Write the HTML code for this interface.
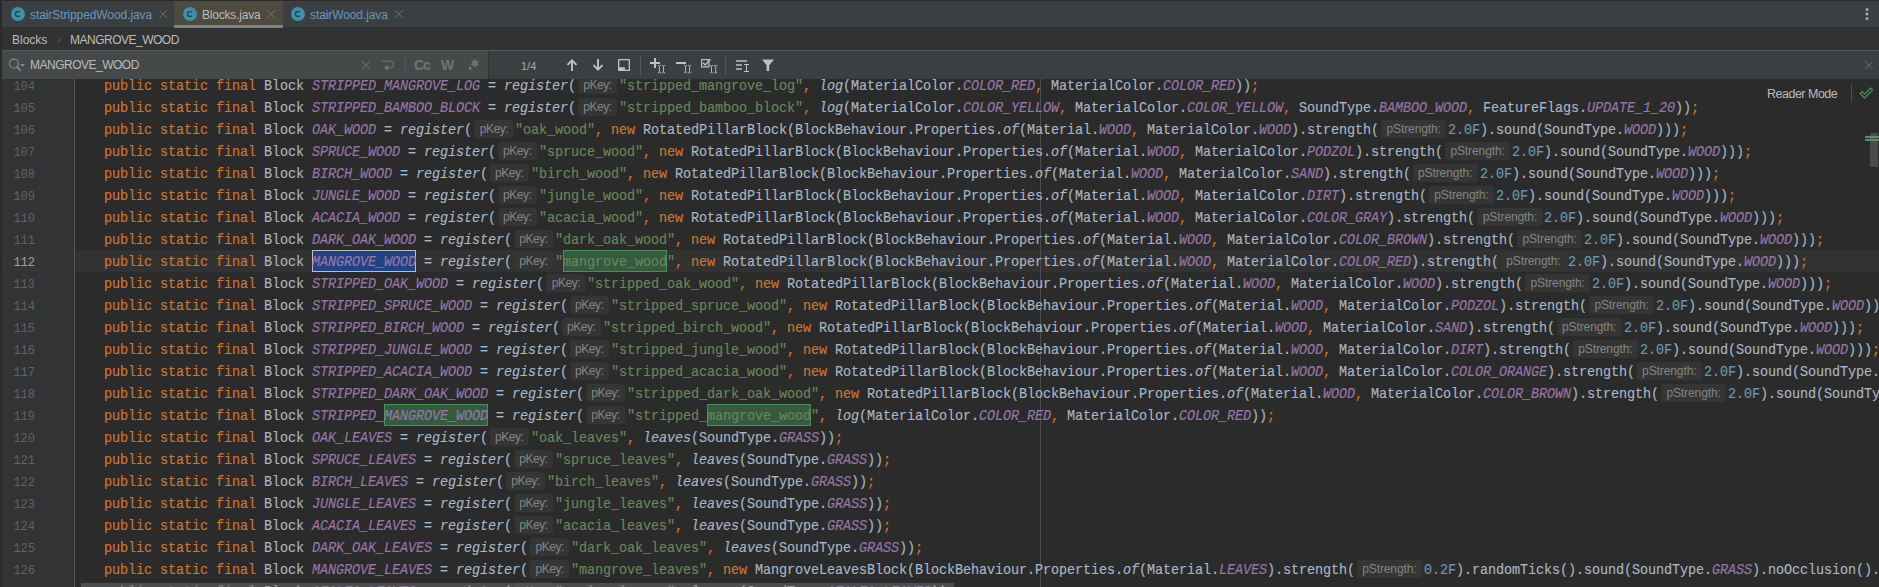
<!DOCTYPE html>
<html><head><meta charset="utf-8">
<style>
*{margin:0;padding:0;box-sizing:border-box}
html,body{width:1879px;height:587px;overflow:hidden;background:#2b2b2b}
body{position:relative;font-family:"Liberation Sans",sans-serif}
.abs{position:absolute}
#tabs{position:absolute;left:0;top:0;width:1879px;height:27px;background:#3c3f41}
.tab{position:absolute;top:0;height:26px}
.ic{position:absolute;top:7px;width:14px;height:14px;border-radius:50%;background:#3f8fa8}
.ic:after{content:"";position:absolute;left:4px;top:4.2px;width:6.2px;height:6px;border-radius:50%;border:1.4px solid #263238;border-right-color:transparent;box-sizing:border-box}
.tt{position:absolute;top:7px;font-size:12px;line-height:16px;white-space:nowrap}
.tab .x{position:absolute;top:9px;width:9px;height:9px}
#crumbs{position:absolute;left:0;top:27px;width:1879px;height:23px;background:#313234}
#search{position:absolute;left:0;top:50px;width:1879px;height:29px;background:#3c3f41}
#sfield{position:absolute;left:0;top:0;width:489px;height:29px;background:#45494a;border-right:1px solid #323232}
#editor{position:absolute;left:0;top:79px;width:1879px;height:508px;overflow:hidden;background:#2b2b2b}
#gutter{position:absolute;left:0;top:0;width:74px;height:508px;background:#313335}
#gline{position:absolute;left:74px;top:0;width:1px;height:508px;background:#555555}
#code{position:absolute;left:0;top:-79px;width:1879px;height:587px}
.ln{position:absolute;left:104px;height:22px;line-height:22px;white-space:pre;font-family:"Liberation Mono",monospace;font-size:15px;letter-spacing:-0.1126px;color:#a9b7c6;-webkit-text-stroke:0.15px currentColor;transform:scaleX(0.9);transform-origin:0 0}
.num{position:absolute;left:0;width:35px;text-align:right;height:22px;line-height:22px;font-family:"Liberation Mono",monospace;font-size:12px;color:#606366}
.num.cur{color:#a4a3a3}
.k{color:#cc7832}
.s{color:#6a8759}
.n{color:#6897bb}
.c{color:#9876aa;font-style:italic}
.m{font-style:italic}
.h{display:inline-block;vertical-align:top;margin-top:0px;height:18px;line-height:19px;font-family:"Liberation Sans",sans-serif;font-size:12px;color:#858585;background:#353535;border-radius:3px;text-align:center;margin-left:2.2222px;-webkit-text-stroke:0}
.h i{display:inline-block;font-style:normal;transform:scaleX(1.11111)}
.hk{width:43.3333px;margin-right:2.2222px;letter-spacing:-0.45px}
.hs{width:72.2222px;margin-right:2.2222px;letter-spacing:-0.1px}
</style></head><body>
<div id="tabs">
  <div class="abs" style="left:174px;top:1px;width:109px;height:26px;background:#4e4a3f"></div>
  <div class="abs" style="left:174px;top:25px;width:109px;height:3px;background:#7d8085;z-index:5"></div>
  <div class="ic" style="left:11px"></div>
  <div class="tt" style="left:30px;color:#6897bb;letter-spacing:-0.08px">stairStrippedWood.java</div>
  <div class="ic" style="left:183px"></div>
  <div class="tt" style="left:202px;color:#bbbbbb;letter-spacing:-0.2px">Blocks.java</div>
  <div class="ic" style="left:291px"></div>
  <div class="tt" style="left:310px;color:#6897bb;letter-spacing:-0.1px">stairWood.java</div>
  <svg class="abs" style="left:0;top:0" width="1879" height="27" viewBox="0 0 1879 27">
    <path d="M159.3 10.2L167 17.9M167 10.2L159.3 17.9" stroke="#6b6e70" stroke-width="1"/>
    <path d="M267.3 10.2L275 17.9M275 10.2L267.3 17.9" stroke="#75736c" stroke-width="1"/>
    <path d="M395.3 10.2L403 17.9M403 10.2L395.3 17.9" stroke="#6b6e70" stroke-width="1"/>
    <circle cx="1867" cy="9.6" r="1.5" fill="#a9a9a9"/>
    <circle cx="1867" cy="14" r="1.5" fill="#a9a9a9"/>
    <circle cx="1867" cy="18.4" r="1.5" fill="#a9a9a9"/>
  </svg>
</div>
<div id="crumbs">
  <div class="abs" style="left:12px;top:5px;font-size:12px;line-height:16px;color:#bbbbbb">Blocks</div>
  <svg class="abs" style="left:0;top:0" width="200" height="23" viewBox="0 27 200 23"><path d="M57.6 36.8L60.9 39.7L57.6 42.6" stroke="#5f6163" fill="none" stroke-width="1"/></svg>
  <div class="abs" style="left:70px;top:5px;font-size:12px;line-height:16px;color:#bbbbbb;letter-spacing:-0.5px">MANGROVE_WOOD</div>
</div>
<div id="search">
  <div id="sfield"></div>
  <svg class="abs" style="left:0;top:0" width="1879" height="29" viewBox="0 50 1879 29">
    <rect x="0" y="50" width="1879" height="1" fill="#555859"/>
    <!-- magnifier -->
    <circle cx="13.9" cy="63.7" r="4.5" stroke="#868b8e" stroke-width="1.2" fill="none"/>
    <path d="M17.2 67L20.2 70.2" stroke="#868b8e" stroke-width="1.7" stroke-linecap="round"/>
    <path d="M20.2 63.9H24.9L22.55 66.8z" fill="#868b8e"/>
    <!-- clear x -->
    <path d="M362 61L370 69M370 61L362 69" stroke="#6b7073" stroke-width="1"/>
    <!-- return -->
    <path d="M382 61.2H390.2A3.3 3.3 0 0 1 390.2 67.8H386.5" stroke="#6b7073" stroke-width="1.2" fill="none"/>
    <path d="M384 67.8L388 64.6V71z" fill="#6b7073"/>
    <rect x="405" y="55" width="1" height="19" fill="#52575a"/>
    <!-- regex .* -->
    <rect x="468.9" y="66.8" width="2.6" height="3" fill="#6e7376"/>
    <g transform="translate(474.9 63.2)" stroke="#6e7376" stroke-width="2.1"><path d="M0 -3.8V3.8"/><path d="M0 -3.8V3.8" transform="rotate(60)"/><path d="M0 -3.8V3.8" transform="rotate(-60)"/></g>
    <!-- up/down -->
    <path d="M572 71V60.3M567.5 64.8L572 60.3L576.5 64.8" stroke="#c0c0c0" stroke-width="1.9" fill="none"/>
    <path d="M598 59V69.7M593.5 65.2L598 69.7L602.5 65.2" stroke="#c0c0c0" stroke-width="1.9" fill="none"/>
    <rect x="618.65" y="59.65" width="10.7" height="10.7" stroke="#c0c0c0" stroke-width="1.3" fill="none"/>
    <rect x="618" y="67.2" width="7" height="3.8" fill="#c0c0c0"/>
    <rect x="640" y="55" width="1" height="20" fill="#52575a"/>
    <!-- plus II -->
    <path d="M655 58V68M650 63H660" stroke="#c0c0c0" stroke-width="2"/>
    <g stroke="#c0c0c0" stroke-width="0.9" fill="none">
      <path d="M657.8 65.2L659.4 66.2L661 65.2M659.4 66.2V72.2M657.8 73.2L659.4 72.2L661 73.2"/>
      <path d="M661.9 65.2L663.5 66.2L665.1 65.2M663.5 66.2V72.2M661.9 73.2L663.5 72.2L665.1 73.2"/>
    </g>
    <path d="M676 63H686" stroke="#c0c0c0" stroke-width="2"/>
    <g stroke="#c0c0c0" stroke-width="0.9" fill="none">
      <path d="M683.9 65.2L685.5 66.2L687.1 65.2M685.5 66.2V72.2M683.9 73.2L685.5 72.2L687.1 73.2"/>
      <path d="M688 65.2L689.6 66.2L691.2 65.2M689.6 66.2V72.2M688 73.2L689.6 72.2L691.2 73.2"/>
    </g>
    <rect x="701.6" y="59.6" width="7.3" height="7.3" stroke="#c0c0c0" stroke-width="1.2" fill="none"/>
    <path d="M703 62.8L705.2 65L710.3 59.3" stroke="#c0c0c0" stroke-width="1.4" fill="none"/>
    <g stroke="#c0c0c0" stroke-width="0.9" fill="none">
      <path d="M709.9 65.2L711.5 66.2L713.1 65.2M711.5 66.2V72.2M709.9 73.2L711.5 72.2L713.1 73.2"/>
      <path d="M714.1 65.2L715.7 66.2L717.3 65.2M715.7 66.2V72.2M714.1 73.2L715.7 72.2L717.3 73.2"/>
    </g>
    <rect x="725" y="55" width="1" height="20" fill="#52575a"/>
    <!-- filter text icon -->
    <path d="M736 61H747M736 65H742M736 69H742" stroke="#c0c0c0" stroke-width="1.6"/>
    <path d="M744 64.5H749M744 71.5H749M746.5 64.5V71.5" stroke="#c0c0c0" stroke-width="1"/>
    <path d="M762 59.5H774L769.2 65.3V71H766.6V65.3z" fill="#c0c0c0"/>
    <!-- far right x -->
    <path d="M1865 61.3L1872.7 69M1872.7 61.3L1865 69" stroke="#6b7073" stroke-width="1"/>
  </svg>
  <div class="abs" style="left:30px;top:7px;font-size:12px;line-height:16px;color:#bbbbbb;letter-spacing:-0.5px">MANGROVE_WOOD</div>
  <div class="abs" style="left:414px;top:7px;font-size:14px;line-height:16px;color:#6e7376;font-weight:bold;letter-spacing:-1px">Cc</div>
  <div class="abs" style="left:441px;top:7px;font-size:14px;line-height:16px;color:#6e7376;font-weight:bold;letter-spacing:-0.5px">W</div>
  <div class="abs" style="left:521px;top:8px;font-size:11px;line-height:16px;color:#a3aab0">1/4</div>
</div>
<div id="editor">
  <div id="gutter">
    <div class="abs" style="left:0;top:171px;width:72px;height:22px;background:#333537"></div>
  </div>
  <div id="gline"></div>
  <div id="code">
    <div class="abs" style="left:75px;top:250px;width:1804px;height:22px;background:#323232"></div>
    <div class="abs" style="left:1040px;top:79px;width:1px;height:508px;background:#4d4d4d"></div>
    <!-- search highlights -->
    <div class="abs" style="left:312px;top:250px;width:104px;height:22px;background:#214283;border:1px solid #bdbdbd"></div>
    <div class="abs" style="left:563px;top:250px;width:104px;height:22px;background:#345a3f;border:1px solid #4b8f57"></div>
    <div class="abs" style="left:384px;top:404px;width:104px;height:22px;background:#345a3f;border:1px solid #4b8f57"></div>
    <div class="abs" style="left:707px;top:404px;width:104px;height:22px;background:#345a3f;border:1px solid #4b8f57"></div>
    <div id="gutnums" class="abs" style="left:0;top:0">
<div class="num" style="top:76px">104</div>
<div class="num" style="top:98px">105</div>
<div class="num" style="top:120px">106</div>
<div class="num" style="top:142px">107</div>
<div class="num" style="top:164px">108</div>
<div class="num" style="top:186px">109</div>
<div class="num" style="top:208px">110</div>
<div class="num" style="top:230px">111</div>
<div class="num cur" style="top:252px">112</div>
<div class="num" style="top:274px">113</div>
<div class="num" style="top:296px">114</div>
<div class="num" style="top:318px">115</div>
<div class="num" style="top:340px">116</div>
<div class="num" style="top:362px">117</div>
<div class="num" style="top:384px">118</div>
<div class="num" style="top:406px">119</div>
<div class="num" style="top:428px">120</div>
<div class="num" style="top:450px">121</div>
<div class="num" style="top:472px">122</div>
<div class="num" style="top:494px">123</div>
<div class="num" style="top:516px">124</div>
<div class="num" style="top:538px">125</div>
<div class="num" style="top:560px">126</div>
<div class="num" style="top:582px">127</div>
    </div>
<div class="ln" style="top:76px"><span class="k">public</span> <span class="k">static</span> <span class="k">final</span> Block <span class="c">STRIPPED_MANGROVE_LOG</span> = <span class="m">register</span>(<span class="h hk"><i>pKey:</i></span><span class="s">&quot;stripped_mangrove_log&quot;</span><span class="k">,</span> <span class="m">log</span>(MaterialColor.<span class="c">COLOR_RED</span><span class="k">,</span> MaterialColor.<span class="c">COLOR_RED</span>))<span class="k">;</span></div>
<div class="ln" style="top:98px"><span class="k">public</span> <span class="k">static</span> <span class="k">final</span> Block <span class="c">STRIPPED_BAMBOO_BLOCK</span> = <span class="m">register</span>(<span class="h hk"><i>pKey:</i></span><span class="s">&quot;stripped_bamboo_block&quot;</span><span class="k">,</span> <span class="m">log</span>(MaterialColor.<span class="c">COLOR_YELLOW</span><span class="k">,</span> MaterialColor.<span class="c">COLOR_YELLOW</span><span class="k">,</span> SoundType.<span class="c">BAMBOO_WOOD</span><span class="k">,</span> FeatureFlags.<span class="c">UPDATE_1_20</span>))<span class="k">;</span></div>
<div class="ln" style="top:120px"><span class="k">public</span> <span class="k">static</span> <span class="k">final</span> Block <span class="c">OAK_WOOD</span> = <span class="m">register</span>(<span class="h hk"><i>pKey:</i></span><span class="s">&quot;oak_wood&quot;</span><span class="k">,</span> <span class="k">new</span> RotatedPillarBlock(BlockBehaviour.Properties.<span class="m">of</span>(Material.<span class="c">WOOD</span><span class="k">,</span> MaterialColor.<span class="c">WOOD</span>).strength(<span class="h hs"><i>pStrength:</i></span><span class="n">2.0F</span>).sound(SoundType.<span class="c">WOOD</span>)))<span class="k">;</span></div>
<div class="ln" style="top:142px"><span class="k">public</span> <span class="k">static</span> <span class="k">final</span> Block <span class="c">SPRUCE_WOOD</span> = <span class="m">register</span>(<span class="h hk"><i>pKey:</i></span><span class="s">&quot;spruce_wood&quot;</span><span class="k">,</span> <span class="k">new</span> RotatedPillarBlock(BlockBehaviour.Properties.<span class="m">of</span>(Material.<span class="c">WOOD</span><span class="k">,</span> MaterialColor.<span class="c">PODZOL</span>).strength(<span class="h hs"><i>pStrength:</i></span><span class="n">2.0F</span>).sound(SoundType.<span class="c">WOOD</span>)))<span class="k">;</span></div>
<div class="ln" style="top:164px"><span class="k">public</span> <span class="k">static</span> <span class="k">final</span> Block <span class="c">BIRCH_WOOD</span> = <span class="m">register</span>(<span class="h hk"><i>pKey:</i></span><span class="s">&quot;birch_wood&quot;</span><span class="k">,</span> <span class="k">new</span> RotatedPillarBlock(BlockBehaviour.Properties.<span class="m">of</span>(Material.<span class="c">WOOD</span><span class="k">,</span> MaterialColor.<span class="c">SAND</span>).strength(<span class="h hs"><i>pStrength:</i></span><span class="n">2.0F</span>).sound(SoundType.<span class="c">WOOD</span>)))<span class="k">;</span></div>
<div class="ln" style="top:186px"><span class="k">public</span> <span class="k">static</span> <span class="k">final</span> Block <span class="c">JUNGLE_WOOD</span> = <span class="m">register</span>(<span class="h hk"><i>pKey:</i></span><span class="s">&quot;jungle_wood&quot;</span><span class="k">,</span> <span class="k">new</span> RotatedPillarBlock(BlockBehaviour.Properties.<span class="m">of</span>(Material.<span class="c">WOOD</span><span class="k">,</span> MaterialColor.<span class="c">DIRT</span>).strength(<span class="h hs"><i>pStrength:</i></span><span class="n">2.0F</span>).sound(SoundType.<span class="c">WOOD</span>)))<span class="k">;</span></div>
<div class="ln" style="top:208px"><span class="k">public</span> <span class="k">static</span> <span class="k">final</span> Block <span class="c">ACACIA_WOOD</span> = <span class="m">register</span>(<span class="h hk"><i>pKey:</i></span><span class="s">&quot;acacia_wood&quot;</span><span class="k">,</span> <span class="k">new</span> RotatedPillarBlock(BlockBehaviour.Properties.<span class="m">of</span>(Material.<span class="c">WOOD</span><span class="k">,</span> MaterialColor.<span class="c">COLOR_GRAY</span>).strength(<span class="h hs"><i>pStrength:</i></span><span class="n">2.0F</span>).sound(SoundType.<span class="c">WOOD</span>)))<span class="k">;</span></div>
<div class="ln" style="top:230px"><span class="k">public</span> <span class="k">static</span> <span class="k">final</span> Block <span class="c">DARK_OAK_WOOD</span> = <span class="m">register</span>(<span class="h hk"><i>pKey:</i></span><span class="s">&quot;dark_oak_wood&quot;</span><span class="k">,</span> <span class="k">new</span> RotatedPillarBlock(BlockBehaviour.Properties.<span class="m">of</span>(Material.<span class="c">WOOD</span><span class="k">,</span> MaterialColor.<span class="c">COLOR_BROWN</span>).strength(<span class="h hs"><i>pStrength:</i></span><span class="n">2.0F</span>).sound(SoundType.<span class="c">WOOD</span>)))<span class="k">;</span></div>
<div class="ln" style="top:252px"><span class="k">public</span> <span class="k">static</span> <span class="k">final</span> Block <span class="c">MANGROVE_WOOD</span> = <span class="m">register</span>(<span class="h hk"><i>pKey:</i></span><span class="s">&quot;mangrove_wood&quot;</span><span class="k">,</span> <span class="k">new</span> RotatedPillarBlock(BlockBehaviour.Properties.<span class="m">of</span>(Material.<span class="c">WOOD</span><span class="k">,</span> MaterialColor.<span class="c">COLOR_RED</span>).strength(<span class="h hs"><i>pStrength:</i></span><span class="n">2.0F</span>).sound(SoundType.<span class="c">WOOD</span>)))<span class="k">;</span></div>
<div class="ln" style="top:274px"><span class="k">public</span> <span class="k">static</span> <span class="k">final</span> Block <span class="c">STRIPPED_OAK_WOOD</span> = <span class="m">register</span>(<span class="h hk"><i>pKey:</i></span><span class="s">&quot;stripped_oak_wood&quot;</span><span class="k">,</span> <span class="k">new</span> RotatedPillarBlock(BlockBehaviour.Properties.<span class="m">of</span>(Material.<span class="c">WOOD</span><span class="k">,</span> MaterialColor.<span class="c">WOOD</span>).strength(<span class="h hs"><i>pStrength:</i></span><span class="n">2.0F</span>).sound(SoundType.<span class="c">WOOD</span>)))<span class="k">;</span></div>
<div class="ln" style="top:296px"><span class="k">public</span> <span class="k">static</span> <span class="k">final</span> Block <span class="c">STRIPPED_SPRUCE_WOOD</span> = <span class="m">register</span>(<span class="h hk"><i>pKey:</i></span><span class="s">&quot;stripped_spruce_wood&quot;</span><span class="k">,</span> <span class="k">new</span> RotatedPillarBlock(BlockBehaviour.Properties.<span class="m">of</span>(Material.<span class="c">WOOD</span><span class="k">,</span> MaterialColor.<span class="c">PODZOL</span>).strength(<span class="h hs"><i>pStrength:</i></span><span class="n">2.0F</span>).sound(SoundType.<span class="c">WOOD</span>)))<span class="k">;</span></div>
<div class="ln" style="top:318px"><span class="k">public</span> <span class="k">static</span> <span class="k">final</span> Block <span class="c">STRIPPED_BIRCH_WOOD</span> = <span class="m">register</span>(<span class="h hk"><i>pKey:</i></span><span class="s">&quot;stripped_birch_wood&quot;</span><span class="k">,</span> <span class="k">new</span> RotatedPillarBlock(BlockBehaviour.Properties.<span class="m">of</span>(Material.<span class="c">WOOD</span><span class="k">,</span> MaterialColor.<span class="c">SAND</span>).strength(<span class="h hs"><i>pStrength:</i></span><span class="n">2.0F</span>).sound(SoundType.<span class="c">WOOD</span>)))<span class="k">;</span></div>
<div class="ln" style="top:340px"><span class="k">public</span> <span class="k">static</span> <span class="k">final</span> Block <span class="c">STRIPPED_JUNGLE_WOOD</span> = <span class="m">register</span>(<span class="h hk"><i>pKey:</i></span><span class="s">&quot;stripped_jungle_wood&quot;</span><span class="k">,</span> <span class="k">new</span> RotatedPillarBlock(BlockBehaviour.Properties.<span class="m">of</span>(Material.<span class="c">WOOD</span><span class="k">,</span> MaterialColor.<span class="c">DIRT</span>).strength(<span class="h hs"><i>pStrength:</i></span><span class="n">2.0F</span>).sound(SoundType.<span class="c">WOOD</span>)))<span class="k">;</span></div>
<div class="ln" style="top:362px"><span class="k">public</span> <span class="k">static</span> <span class="k">final</span> Block <span class="c">STRIPPED_ACACIA_WOOD</span> = <span class="m">register</span>(<span class="h hk"><i>pKey:</i></span><span class="s">&quot;stripped_acacia_wood&quot;</span><span class="k">,</span> <span class="k">new</span> RotatedPillarBlock(BlockBehaviour.Properties.<span class="m">of</span>(Material.<span class="c">WOOD</span><span class="k">,</span> MaterialColor.<span class="c">COLOR_ORANGE</span>).strength(<span class="h hs"><i>pStrength:</i></span><span class="n">2.0F</span>).sound(SoundType.<span class="c">WOOD</span>)))<span class="k">;</span></div>
<div class="ln" style="top:384px"><span class="k">public</span> <span class="k">static</span> <span class="k">final</span> Block <span class="c">STRIPPED_DARK_OAK_WOOD</span> = <span class="m">register</span>(<span class="h hk"><i>pKey:</i></span><span class="s">&quot;stripped_dark_oak_wood&quot;</span><span class="k">,</span> <span class="k">new</span> RotatedPillarBlock(BlockBehaviour.Properties.<span class="m">of</span>(Material.<span class="c">WOOD</span><span class="k">,</span> MaterialColor.<span class="c">COLOR_BROWN</span>).strength(<span class="h hs"><i>pStrength:</i></span><span class="n">2.0F</span>).sound(SoundType.<span class="c">WOOD</span>)))<span class="k">;</span></div>
<div class="ln" style="top:406px"><span class="k">public</span> <span class="k">static</span> <span class="k">final</span> Block <span class="c">STRIPPED_MANGROVE_WOOD</span> = <span class="m">register</span>(<span class="h hk"><i>pKey:</i></span><span class="s">&quot;stripped_mangrove_wood&quot;</span><span class="k">,</span> <span class="m">log</span>(MaterialColor.<span class="c">COLOR_RED</span><span class="k">,</span> MaterialColor.<span class="c">COLOR_RED</span>))<span class="k">;</span></div>
<div class="ln" style="top:428px"><span class="k">public</span> <span class="k">static</span> <span class="k">final</span> Block <span class="c">OAK_LEAVES</span> = <span class="m">register</span>(<span class="h hk"><i>pKey:</i></span><span class="s">&quot;oak_leaves&quot;</span><span class="k">,</span> <span class="m">leaves</span>(SoundType.<span class="c">GRASS</span>))<span class="k">;</span></div>
<div class="ln" style="top:450px"><span class="k">public</span> <span class="k">static</span> <span class="k">final</span> Block <span class="c">SPRUCE_LEAVES</span> = <span class="m">register</span>(<span class="h hk"><i>pKey:</i></span><span class="s">&quot;spruce_leaves&quot;</span><span class="k">,</span> <span class="m">leaves</span>(SoundType.<span class="c">GRASS</span>))<span class="k">;</span></div>
<div class="ln" style="top:472px"><span class="k">public</span> <span class="k">static</span> <span class="k">final</span> Block <span class="c">BIRCH_LEAVES</span> = <span class="m">register</span>(<span class="h hk"><i>pKey:</i></span><span class="s">&quot;birch_leaves&quot;</span><span class="k">,</span> <span class="m">leaves</span>(SoundType.<span class="c">GRASS</span>))<span class="k">;</span></div>
<div class="ln" style="top:494px"><span class="k">public</span> <span class="k">static</span> <span class="k">final</span> Block <span class="c">JUNGLE_LEAVES</span> = <span class="m">register</span>(<span class="h hk"><i>pKey:</i></span><span class="s">&quot;jungle_leaves&quot;</span><span class="k">,</span> <span class="m">leaves</span>(SoundType.<span class="c">GRASS</span>))<span class="k">;</span></div>
<div class="ln" style="top:516px"><span class="k">public</span> <span class="k">static</span> <span class="k">final</span> Block <span class="c">ACACIA_LEAVES</span> = <span class="m">register</span>(<span class="h hk"><i>pKey:</i></span><span class="s">&quot;acacia_leaves&quot;</span><span class="k">,</span> <span class="m">leaves</span>(SoundType.<span class="c">GRASS</span>))<span class="k">;</span></div>
<div class="ln" style="top:538px"><span class="k">public</span> <span class="k">static</span> <span class="k">final</span> Block <span class="c">DARK_OAK_LEAVES</span> = <span class="m">register</span>(<span class="h hk"><i>pKey:</i></span><span class="s">&quot;dark_oak_leaves&quot;</span><span class="k">,</span> <span class="m">leaves</span>(SoundType.<span class="c">GRASS</span>))<span class="k">;</span></div>
<div class="ln" style="top:560px"><span class="k">public</span> <span class="k">static</span> <span class="k">final</span> Block <span class="c">MANGROVE_LEAVES</span> = <span class="m">register</span>(<span class="h hk"><i>pKey:</i></span><span class="s">&quot;mangrove_leaves&quot;</span><span class="k">,</span> <span class="k">new</span> MangroveLeavesBlock(BlockBehaviour.Properties.<span class="m">of</span>(Material.<span class="c">LEAVES</span>).strength(<span class="h hs"><i>pStrength:</i></span><span class="n">0.2F</span>).randomTicks().sound(SoundType.<span class="c">GRASS</span>).noOcclusion().<span class="m">dynamicShape</span>())<span class="k">;</span></div>
<div class="ln" style="top:582px"><span class="k">public</span> <span class="k">static</span> <span class="k">final</span> Block <span class="c">AZALEA_LEAVES</span> = <span class="m">register</span>(<span class="h hk"><i>pKey:</i></span><span class="s">&quot;azalea_leaves&quot;</span><span class="k">,</span> <span class="m">leaves</span>(SoundType.<span class="c">AZALEA_LEAVES</span>))<span class="k">;</span></div>
    <!-- reader mode -->
    <div class="abs" style="left:1767px;top:86px;font-size:12.5px;line-height:16px;color:#bbbbbb;letter-spacing:-0.5px">Reader Mode</div>
    <div class="abs" style="left:1851px;top:84px;width:1px;height:18px;background:#4b4d4f"></div>
    <svg class="abs" style="left:1855px;top:84px" width="22" height="18" viewBox="1855 84 22 18"><path d="M1860.2 93.6L1864.6 98L1872.6 90L1870.6 88L1864.6 94L1862.2 91.6z" stroke="#499c54" stroke-width="1.1" fill="none" stroke-linejoin="miter"/></svg>
    <!-- right scrollbar -->
    <div class="abs" style="left:1870px;top:133px;width:8px;height:34px;background:#4b4b4b"></div>
    <div class="abs" style="left:1865px;top:136px;width:14px;height:2px;background:#5e9a6e;opacity:.9"></div>
    <div class="abs" style="left:1865px;top:139px;width:14px;height:2px;background:#5e9a6e;opacity:.9"></div>
    <!-- bottom scrollbar -->
    <div class="abs" style="left:81px;top:583px;width:873px;height:4px;background:rgba(120,120,120,.45)"></div>
  </div>
</div>
<div class="abs" style="left:0;top:0;width:1879px;height:1px;background:#2b2b2b"></div>
<div class="abs" style="left:0;top:0;width:2px;height:587px;background:#2b2b2b"></div>
</body></html>
